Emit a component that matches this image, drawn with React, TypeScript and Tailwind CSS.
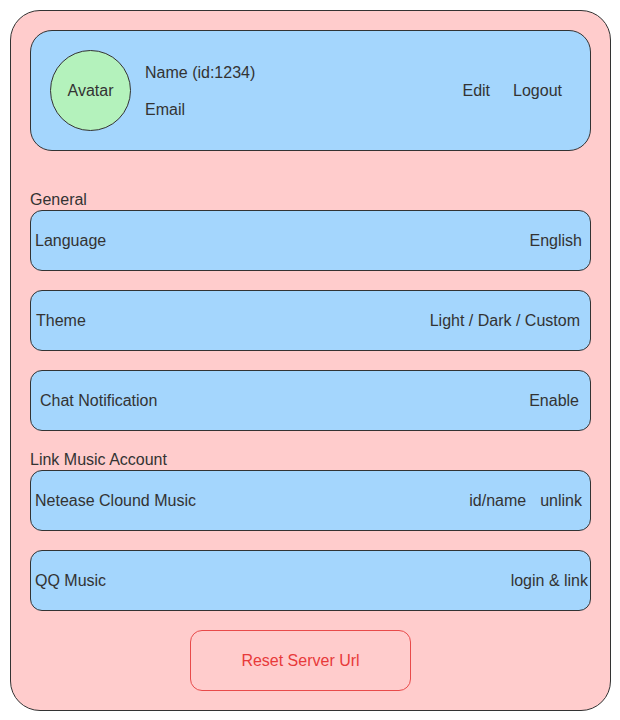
const font = { fontFamily: '"Liberation Sans", Arial, sans-serif' };

type RowProps = {
  label: string;
  right: React.ReactNode;
  labelPad?: string;
  rightPad?: string;
};

function SettingRow({ label, right, labelPad = 'pl-[4px]', rightPad = 'pr-[8px]' }: RowProps) {
  return (
    <div
      className={`h-[61px] shrink-0 rounded-[12px] border border-[#333] bg-[#a4d6fd] flex items-center justify-between ${labelPad} ${rightPad}`}
    >
      <span className="leading-[20px]">{label}</span>
      <span className="leading-[20px]">{right}</span>
    </div>
  );
}

function SectionLabel({ children, className = '' }: { children: string; className?: string }) {
  return <div className={`h-[20px] leading-[20px] ${className}`}>{children}</div>;
}

export default function App() {
  return (
    <div className="min-h-screen bg-white text-[16px] text-[#333]" style={font}>
      <div className="ml-[10px] mt-[10px] w-[601px] h-[701px] rounded-[30px] border border-[#333] bg-[#ffcccc] pt-[19px] px-[19px] flex flex-col">
        {/* Profile header */}
        <div className="h-[121px] shrink-0 rounded-[22px] border border-[#333] bg-[#a4d6fd] flex items-center pl-[19px] pr-[28px]">
          <div className="w-[81px] h-[81px] rounded-full border border-[#333] bg-[#b4f2bc] flex items-center justify-center">
            Avatar
          </div>
          <div className="ml-[14px] flex flex-col gap-[17px] pt-[1px]">
            <span className="leading-[20px]">Name (id:1234)</span>
            <span className="leading-[20px]">Email</span>
          </div>
          <div className="ml-auto flex items-center gap-[23px] leading-[20px]">
            <span>Edit</span>
            <span>Logout</span>
          </div>
        </div>

        {/* General */}
        <SectionLabel className="mt-[39px]">General</SectionLabel>
        <div className="flex flex-col gap-[19px]">
          <SettingRow label="Language" right="English" />
          <SettingRow label="Theme" labelPad="pl-[5px]" rightPad="pr-[10px]" right="Light / Dark / Custom" />
          <SettingRow label="Chat Notification" labelPad="pl-[9px]" rightPad="pr-[11px]" right="Enable" />
        </div>

        {/* Link Music Account */}
        <SectionLabel className="mt-[19px]">Link Music Account</SectionLabel>
        <div className="flex flex-col gap-[19px]">
          <SettingRow
            label="Netease Clound Music"
            right={
              <span className="flex gap-[14px]">
                <span>id/name</span>
                <span>unlink</span>
              </span>
            }
          />
          <SettingRow label="QQ Music" rightPad="pr-[2px]" right="login & link" />
        </div>

        <button className="mt-[19px] ml-[160px] w-[221px] h-[61px] shrink-0 rounded-[12px] border border-[#e84a4a] bg-transparent text-[#e83a3a] flex items-center justify-center">
          Reset Server Url
        </button>
      </div>
    </div>
  );
}
